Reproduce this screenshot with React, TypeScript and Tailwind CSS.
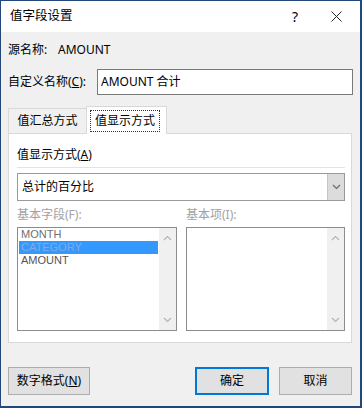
import React from "react";

const FONT = { fontFamily: '"Noto Sans", "Noto Sans CJK SC", sans-serif' };
const LIST_FONT = { fontFamily: '"Liberation Sans", Arial, sans-serif' };

const ChevronUp = () => (
  <svg width="9" height="6" viewBox="0 0 9 6" fill="none">
    <path d="M1 5 L4.5 1.5 L8 5" stroke="#b4b4b4" strokeWidth="1.2" />
  </svg>
);

const ChevronDown = ({ color = "#b4b4b4" }: { color?: string }) => (
  <svg width="9" height="6" viewBox="0 0 9 6" fill="none">
    <path d="M1 1 L4.5 4.5 L8 1" stroke={color} strokeWidth="1.2" />
  </svg>
);

const ListBox = ({ items, className }: { items: { label: string; selected?: boolean; dark?: boolean }[]; className: string }) => (
  <div className={`flex h-[104px] border border-[#8c8c8c] bg-white ${className}`}>
    <div style={LIST_FONT} className="flex flex-1 flex-col">
      {items.map((it) => (
        <div
          key={it.label}
          className={`mx-px flex h-[13px] items-center overflow-hidden px-[2px] text-[11px] leading-[13px] ${
            it.selected ? "bg-[#3399ff] text-[#86a9dd]" : it.dark ? "text-[#555]" : "text-[#707070]"
          }`}
        >
          {it.label}
        </div>
      ))}
    </div>
    <div className="flex w-[17px] flex-col items-center justify-between bg-[#f0f0f0] pt-[7px] pb-[7px]">
      <ChevronUp />
      <ChevronDown />
    </div>
  </div>
);

export default function App() {
  return (
    <div
      style={FONT}
      className="flex h-[408px] w-[362px] flex-col border-t border-l border-r-2 border-b-2 border-[#24477a] text-[12px] text-black"
    >
      {/* title bar */}
      <div className="flex h-[31px] items-center bg-white pl-[9px]">
        <span className="flex-1 text-[12.5px]">值字段设置</span>
        <span className="w-[20px] text-center text-[14px]">?</span>
        <span className="ml-[25px] mr-[18px] flex w-[12px] items-center justify-center">
          <svg width="11" height="11" viewBox="0 0 11 11">
            <path d="M0.5 0.5 L10.5 10.5 M10.5 0.5 L0.5 10.5" stroke="#222" strokeWidth="1" />
          </svg>
        </span>
      </div>

      {/* body */}
      <div className="flex flex-1 flex-col bg-[#f0f0f0] pt-[10px] pr-[8px] pb-[11px] pl-[7px]">
        <div className="flex h-[16px] items-center">
          <span className="w-[50px]">源名称:</span>
          <span>AMOUNT</span>
        </div>

        <div className="mt-[11px] flex h-[26px] items-center">
          <span className="w-[89px]">
            自定义名称(<span className="underline">C</span>):
          </span>
          <div className="-mr-px flex h-[26px] flex-1 items-center border border-[#7a7a7a] bg-white pl-[3px]">
            AMOUNT 合计
          </div>
        </div>

        {/* tabs */}
        <div className="mt-[11px] flex h-[27px] items-end">
          <div className="flex h-[25px] w-[78px] items-center justify-center border-t border-l border-[#d9d9d9] bg-[#f0f0f0] pb-[1px]">
            值汇总方式
          </div>
          <div className="relative z-10 -mb-px flex h-[28px] w-[81px] items-start border-t border-l border-r border-[#d9d9d9] bg-white pt-[3px] pl-[3px]">
            <span className="flex h-[22px] w-[70px] items-center justify-center border border-dotted border-[#333]">
              值显示方式
            </span>
          </div>
        </div>

        {/* tab panel */}
        <div className="flex h-[210px] flex-col border border-[#d9d9d9] bg-white pt-[13px] pr-[6px] pb-[11px] pl-[8px]">
          <div className="flex h-[16px] items-center">
            值显示方式(<span className="underline">A</span>)
          </div>
          <div className="mt-[4px] h-px bg-[#e3e3e3]" />
          <div className="mt-[5px] flex h-[28px] border border-[#9a9a9a] bg-white">
            <div className="flex flex-1 items-center pl-[4px]">总计的百分比</div>
            <div className="flex w-[17px] items-center justify-center border-l border-[#c4c4c4] bg-[#dcdcdc]">
              <ChevronDown color="#6a6a6a" />
            </div>
          </div>

          <div className="mt-[6px] flex h-[16px] items-center text-[#a2a2a2]">
            <span className="w-[169px]">基本字段(F):</span>
            <span>基本项(I):</span>
          </div>

          <div className="mt-[4px] flex gap-[9px]">
            <ListBox
              className="w-[160px]"
              items={[{ label: "MONTH" }, { label: "CATEGORY", selected: true }, { label: "AMOUNT", dark: true }]}
            />
            <ListBox className="w-[159px]" items={[]} />
          </div>
        </div>

        {/* buttons */}
        <div className="mt-[24px] flex h-[28px]">
          <button className="h-[28px] w-[82px] border border-[#adadad] bg-[#e1e1e1] text-[12px]">
            数字格式(<span className="underline">N</span>)
          </button>
          <button className="ml-auto h-[28px] w-[74px] border-2 border-[#0078d7] bg-[#e1e1e1] text-[12px]">
            确定
          </button>
          <button className="ml-[10px] h-[28px] w-[73px] border border-[#adadad] bg-[#e1e1e1] text-[12px]">
            取消
          </button>
        </div>
      </div>
    </div>
  );
}
